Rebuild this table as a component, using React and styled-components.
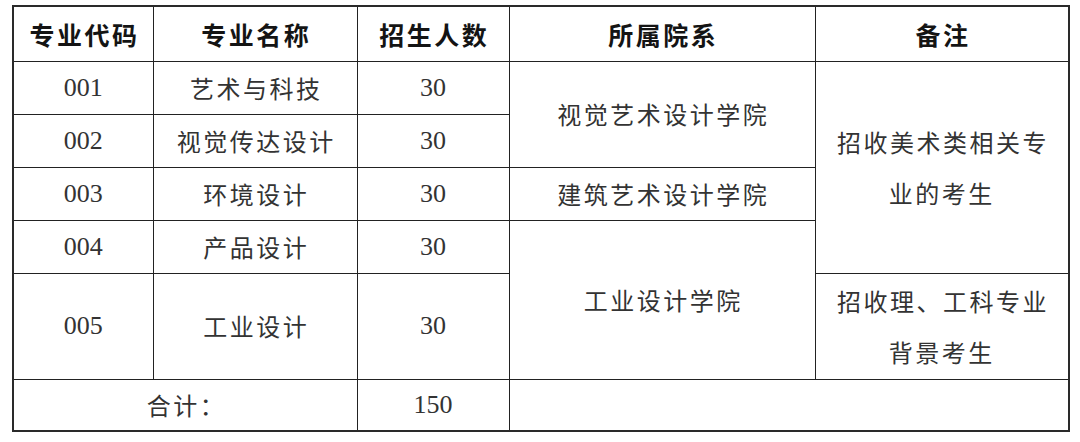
import React from "react";
import styled, { createGlobalStyle } from "styled-components";

const GlobalStyle = createGlobalStyle`
  html, body {
    margin: 0;
    padding: 0;
    background: #ffffff;
  }
  body {
    font-family: "Noto Sans CJK SC", "Noto Sans", sans-serif;
  }
`;

const Page = styled.div`
  width: 1080px;
  height: 442px;
  box-sizing: border-box;
  padding: 5px 0 0 12px;
  background: #fff;
`;

const Table = styled.table`
  border-collapse: collapse;
  table-layout: fixed;
  width: 1056px;
  border: 2px solid #2a2a2a;
`;

const Row = styled.tr`
  height: ${(p) => p.$h}px;
`;

const HeadCell = styled.th`
  border: 1px solid #222;
  padding: 0;
  text-align: center;
  vertical-align: middle;
  font-family: "Noto Sans CJK SC", sans-serif;
  font-weight: 700;
  font-size: 25px;
  letter-spacing: 2.5px;
  text-indent: 2.5px;
  color: #141414;
`;

const Cell = styled.td`
  border: 1px solid #222;
  padding: 0 ${(p) => (p.$wrap ? 18 : 0)}px;
  text-align: center;
  vertical-align: middle;
  font-family: ${(p) =>
    p.$num
      ? `"Liberation Serif", "Noto Sans CJK SC", serif`
      : `"Noto Sans CJK SC", sans-serif`};
  font-size: ${(p) => (p.$num ? 26 : 24)}px;
  letter-spacing: ${(p) => (p.$num ? 0 : 2.5)}px;
  text-indent: ${(p) => (p.$num ? 0 : 2.5)}px;
  line-height: ${(p) => (p.$wrap ? 51 : 30)}px;
  color: #333;
`;

const majors = [
  { code: "001", name: "艺术与科技", n: 30 },
  { code: "002", name: "视觉传达设计", n: 30 },
  { code: "003", name: "环境设计", n: 30 },
  { code: "004", name: "产品设计", n: 30 },
  { code: "005", name: "工业设计", n: 30 },
];

export default function App() {
  return (
    <Page>
      <GlobalStyle />
      <Table>
        <colgroup>
          <col style={{ width: 140 }} />
          <col style={{ width: 204 }} />
          <col style={{ width: 152 }} />
          <col style={{ width: 306 }} />
          <col style={{ width: 254 }} />
        </colgroup>
        <thead>
          <Row $h={55}>
            <HeadCell>专业代码</HeadCell>
            <HeadCell>专业名称</HeadCell>
            <HeadCell>招生人数</HeadCell>
            <HeadCell>所属院系</HeadCell>
            <HeadCell>备注</HeadCell>
          </Row>
        </thead>
        <tbody>
          <Row $h={53}>
            <Cell $num>{majors[0].code}</Cell>
            <Cell>{majors[0].name}</Cell>
            <Cell $num>{majors[0].n}</Cell>
            <Cell rowSpan={2}>视觉艺术设计学院</Cell>
            <Cell rowSpan={4} $wrap>
              招收美术类相关专业的考生
            </Cell>
          </Row>
          <Row $h={53}>
            <Cell $num>{majors[1].code}</Cell>
            <Cell>{majors[1].name}</Cell>
            <Cell $num>{majors[1].n}</Cell>
          </Row>
          <Row $h={53}>
            <Cell $num>{majors[2].code}</Cell>
            <Cell>{majors[2].name}</Cell>
            <Cell $num>{majors[2].n}</Cell>
            <Cell>建筑艺术设计学院</Cell>
          </Row>
          <Row $h={53}>
            <Cell $num>{majors[3].code}</Cell>
            <Cell>{majors[3].name}</Cell>
            <Cell $num>{majors[3].n}</Cell>
            <Cell rowSpan={2}>工业设计学院</Cell>
          </Row>
          <Row $h={106}>
            <Cell $num>{majors[4].code}</Cell>
            <Cell>{majors[4].name}</Cell>
            <Cell $num>{majors[4].n}</Cell>
            <Cell $wrap>招收理、工科专业背景考生</Cell>
          </Row>
          <Row $h={52}>
            <Cell colSpan={2}>合计：</Cell>
            <Cell $num>150</Cell>
            <Cell colSpan={2}></Cell>
          </Row>
        </tbody>
      </Table>
    </Page>
  );
}
